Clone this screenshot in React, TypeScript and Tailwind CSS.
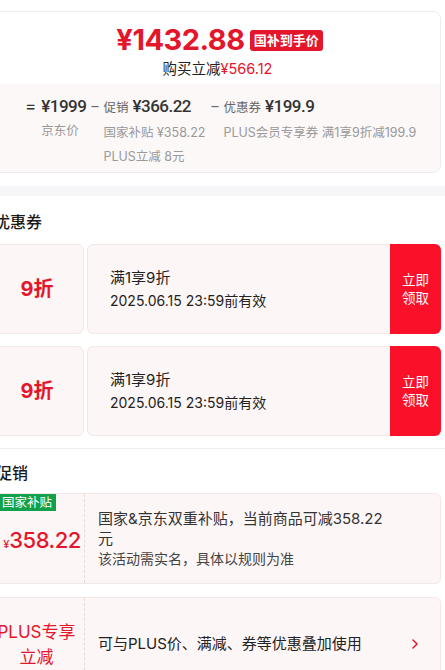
import React from "react";

const FONT = { fontFamily: 'Inter, "Noto Sans CJK SC", sans-serif' };
const NUM = { fontFamily: 'Roboto, "Noto Sans CJK SC", sans-serif' };

function Coupon() {
  return (
    <div className="flex h-[90px]">
      <div className="relative w-[98px] shrink-0 rounded-[6px] border border-[#f3e7e7] bg-[#fdf6f6] flex items-center justify-center pl-[4px]">
        <span className="text-[20px] font-bold text-[#e3162b] leading-none">9折</span>
      </div>
      <div className="relative flex-1 ml-[3px] rounded-l-[6px] border border-r-0 border-[#f3e7e7] bg-[#fdf6f6] flex flex-col justify-center pl-[22px] gap-[4px]">
        <span className="absolute -left-[6px] -top-[4px] h-[7px] w-[7px] rounded-full bg-white" />
        <span className="absolute -left-[6px] -bottom-[4px] h-[7px] w-[7px] rounded-full bg-white" />
        <div className="text-[15px] leading-[19px] text-[#222]">满1享9折</div>
        <div className="text-[14px] leading-[19px] text-[#222]">2025.06.15 23:59前有效</div>
      </div>
      <div className="w-[51px] shrink-0 rounded-r-[6px] bg-[#fa1029] flex flex-col items-center justify-center text-white text-[13.5px] leading-[18px]">
        <span>立即</span>
        <span>领取</span>
      </div>
    </div>
  );
}

export default function App() {
  return (
    <div className="w-[445px] overflow-hidden bg-white" style={FONT}>
      <div className="-ml-[14px] w-[455px] pt-[11px]">
        {/* Top price card */}
        <div className="rounded-[8px] border border-[#ececec] overflow-hidden">
          <div className="h-[72px] bg-white flex flex-col items-center pt-[13px]">
            <div className="flex items-center gap-[5px] pl-[12px]">
              <span className="text-[29px] font-bold leading-[30px] text-[#e3162b] tracking-[-0.5px]">¥1432.88</span>
              <span className="rounded-[3px] bg-[#e3162b] px-[4px] h-[21px] flex items-center text-[13px] font-bold text-white leading-none">国补到手价</span>
            </div>
            <div className="mt-[5px] text-[14.5px] leading-[18px] text-[#222] pl-[8px]">
              购买立减<span className="text-[#e3162b]">¥566.12</span>
            </div>
          </div>
          <div className="h-[88px] bg-[#fcf8f8] pl-[38px] pt-[9px] flex items-start whitespace-nowrap">
            <span className="shrink-0 text-[17px] leading-[26px] text-[#333] mr-[5px]">=</span>
            <div className="shrink-0 flex flex-col">
              <span className="text-[17px] font-medium leading-[26px] text-[#333] tracking-[-0.5px]" style={NUM}>¥1999</span>
              <span className="text-[12.5px] leading-[22px] text-[#999] mt-[1px]">京东价</span>
            </div>
            <span className="shrink-0 text-[14px] leading-[26px] text-[#666] mx-[5px]">–</span>
            <div className="shrink-0 flex flex-col">
              <span className="leading-[26px] text-[#333]">
                <span className="text-[12.5px] text-[#666] mr-[4px]">促销</span>
                <span className="text-[17px] font-medium tracking-[-0.5px]" style={NUM}>¥366.22</span>
              </span>
              <span className="text-[12.5px] leading-[22px] text-[#999] mt-[1px]">国家补贴 ¥358.22</span>
              <span className="text-[12.5px] leading-[22px] text-[#999] mt-[2px]">PLUS立减 8元</span>
            </div>
            <span className="shrink-0 text-[14px] leading-[26px] text-[#666] ml-[6px] mr-[5px]">–</span>
            <div className="shrink-0 flex flex-col">
              <span className="leading-[26px] text-[#333]">
                <span className="text-[12.5px] text-[#666] mr-[4px]">优惠券</span>
                <span className="text-[17px] font-medium tracking-[-0.5px]" style={NUM}>¥199.9</span>
              </span>
              <span className="text-[12.5px] leading-[22px] text-[#999] mt-[1px]">PLUS会员专享券 满1享9折减199.9</span>
            </div>
          </div>
        </div>
      </div>

      <div className="mt-[13px] h-[10px] bg-[#f6f6f9]" />

      <div className="-ml-[14px] w-[455px]">
        <div className="pl-[8px] pt-[16px] pb-[12px] text-[16px] leading-[20px] font-medium text-[#1a1a1a]">优惠券</div>
        <div className="flex flex-col gap-[12px]">
          <Coupon />
          <Coupon />
        </div>
        <div className="mt-[12px] h-px bg-[#eeeeee] ml-[14px] mr-[-4px]" />

        <div className="pl-[10px] pt-[14px] pb-[10px] text-[16px] leading-[20px] font-medium text-[#1a1a1a]">促销</div>

        <div className="flex flex-col gap-[13px]">
          <div className="relative flex h-[91px] rounded-[6px] border border-[#f3e7e7] bg-[#fdf6f6] overflow-hidden">
            <div className="relative w-[98px] shrink-0 border-r border-dashed border-[#e8d8d8] flex items-center justify-center pl-[13px] pt-[2px]">
              <span className="absolute left-0 top-0 h-[17px] bg-[#12a04a] pl-[15px] pr-[4px] text-[12.5px] leading-[17px] text-white">国家补贴</span>
              <span className="text-[#e3162b] font-medium leading-none whitespace-nowrap">
                <span className="text-[11px]">¥</span>
                <span className="text-[22px] tracking-[-0.5px]">358.22</span>
              </span>
            </div>
            <div className="flex flex-col justify-center pl-[13px] text-[#333]">
              <div className="text-[15px] leading-[20px] whitespace-nowrap">国家&amp;京东双重补贴，当前商品可减358.22</div>
              <div className="text-[15px] leading-[20px]">元</div>
              <div className="text-[14px] leading-[20px] text-[#444]">该活动需实名，具体以规则为准</div>
            </div>
          </div>

          <div className="relative flex h-[94px] rounded-[6px] border border-[#f3e7e7] bg-[#fdf6f6] overflow-hidden">
            <div className="w-[98px] shrink-0 border-r border-dashed border-[#e8d8d8] flex flex-col items-center justify-center text-[17px] leading-[25px] text-[#e3162b] pl-[2px] pt-[2px]">
              <span className="whitespace-nowrap">PLUS专享</span>
              <span>立减</span>
            </div>
            <div className="flex flex-1 items-center pl-[13px] pr-[18px]">
              <span className="flex-1 text-[15px] text-[#222] whitespace-nowrap">可与PLUS价、满减、券等优惠叠加使用</span>
              <svg width="8" height="12" viewBox="0 0 8 12" className="mr-[3px]">
                <path d="M2 2 L6 6 L2 10" fill="none" stroke="#e3162b" strokeWidth="1.5" strokeLinecap="round" strokeLinejoin="round" />
              </svg>
            </div>
          </div>
        </div>
      </div>
    </div>
  );
}
